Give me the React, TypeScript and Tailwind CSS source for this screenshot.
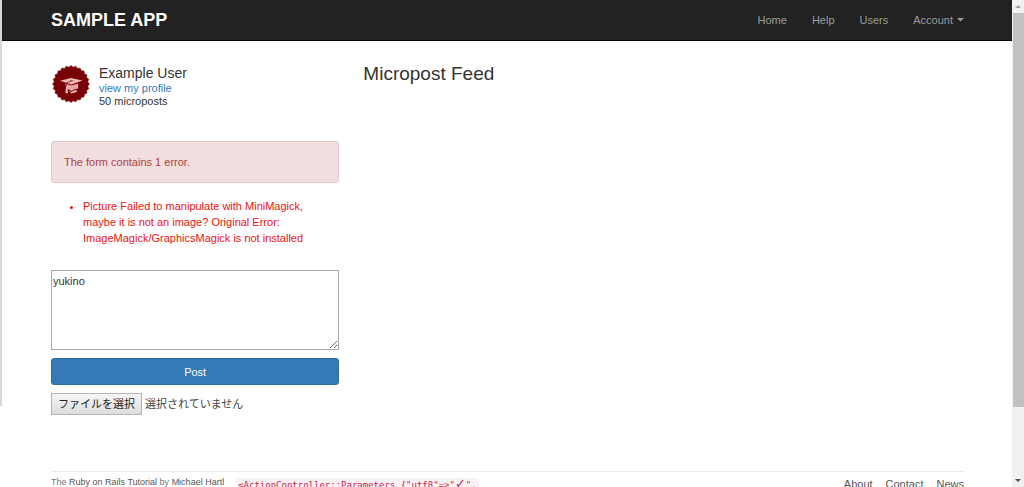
import React from "react";

const navLinks = ["Home", "Help", "Users"];
const footerLinks = ["About", "Contact", "News"];

function Badge() {
  const points = Array.from({ length: 48 }, (_, i) => {
    const r = i % 2 ? 16.8 : 18.4;
    const a = (i * Math.PI) / 24;
    return `${(20 + r * Math.cos(a)).toFixed(2)},${(20 + r * Math.sin(a)).toFixed(2)}`;
  }).join(" ");
  return (
    <svg viewBox="0 0 40 40" className="size-10 shrink-0" role="img" aria-label="Example User">
      <polygon points={points} fill="#780206" stroke="#780206" strokeWidth="0.6" strokeLinejoin="round" />
      <path d="M9 16.8 20 14 31.5 16.6 20.5 20.4Z" fill="#efb9b5" />
      <path d="M13.8 19.6 20.5 21.6 27.2 19.4 27.2 24.4 Q23 24.6 20.6 27 Q18.4 25.2 16.5 25.2Z" fill="#e9a5a1" />
      <path d="M20.5 16.8 15.3 19 15.3 24" fill="none" stroke="#780206" strokeWidth="0.7" />
      <path d="M15 22.5 16.2 22.5 17 29.2 14.4 29.2Z" fill="#efc0bd" />
      <path d="M17.8 26.4 20.4 29.4 25.8 28 25.8 26 Q22.6 26 20.6 28Z" fill="#efb9b5" />
      <ellipse cx="20.5" cy="16.6" rx="1.6" ry="0.7" fill="#9b3a3a" />
    </svg>
  );
}

function Header() {
  return (
    <header className="h-[41px] border-b border-[#080808] bg-[#222222] pr-12 pl-[49px]">
      <div className="flex h-10 items-center justify-between">
        <a href="#" className="text-[18px] leading-5 font-bold text-white">
          SAMPLE APP
        </a>
        <nav className="flex items-center gap-[25px] text-[11px] leading-4 text-[#9d9d9d]">
          {navLinks.map((label) => (
            <a key={label} href="#">
              {label}
            </a>
          ))}
          <button type="button" className="flex items-center gap-1">
            Account
            <svg viewBox="0 0 7 4" className="h-1 w-[7px]" aria-hidden="true">
              <path d="M0 0H7L3.5 3.6Z" fill="currentColor" />
            </svg>
          </button>
        </nav>
      </div>
    </header>
  );
}

function UserInfo() {
  return (
    <section className="flex gap-2">
      <Badge />
      <div className="text-[11px] leading-[13px]">
        <h1 className="text-[14px] leading-[18px]">Example User</h1>
        <a href="#" className="block text-[#337ab7]">
          view my profile
        </a>
        <span className="block">50 microposts</span>
      </div>
    </section>
  );
}

function MicropostForm() {
  return (
    <form className="mt-[33px] text-[11px] leading-4" onSubmit={(e) => e.preventDefault()}>
      <div role="alert" className="rounded-[3px] border border-[#e6c6cb] bg-[#f2dede] p-3 text-[#a94442]">
        The form contains 1 error.
      </div>
      <ul className="mt-[15px] list-disc pr-6 pl-8 text-[#ee1111]">
        <li>
          Picture Failed to manipulate with MiniMagick, maybe it is not an image? Original Error:
          ImageMagick/GraphicsMagick is not installed
        </li>
      </ul>
      <textarea
        aria-label="Compose new micropost"
        defaultValue="yukino"
        className="mt-6 block h-20 w-full resize-y border border-[#a9a9a9] bg-white px-px py-0.5"
      />
      <button
        type="submit"
        className="mt-2 block h-[27px] w-full rounded-[3px] border border-[#2e6da4] bg-[#337ab7] font-medium text-white"
      >
        Post
      </button>
      <label className="mt-2 flex items-center gap-[3px]">
        <input type="file" className="sr-only" />
        <span className="border border-[#b4b4b4] bg-linear-to-b from-[#f6f6f6] to-[#dddddd] px-1.5 py-0.5 text-[#222222]">
          ファイルを選択
        </span>
        <span className="text-[#444444]">選択されていません</span>
      </label>
    </form>
  );
}

function Footer() {
  return (
    <footer className="mt-14 flex items-start justify-between border-t border-[#eaeaea] pt-1 text-[#777777]">
      <div className="flex items-start gap-3">
        <small className="text-[9px] leading-3">
          The{" "}
          <a href="#" className="text-[#555555]">
            Ruby on Rails Tutorial
          </a>{" "}
          by{" "}
          <a href="#" className="text-[#555555]">
            Michael Hartl
          </a>
        </small>
        <code className="mt-0.5 rounded-[3px] bg-[#f9f2f4] px-0.5 font-['DejaVu_Sans_Mono',monospace] text-[9px] leading-3 text-[#c7254e]">
          {'<ActionController::Parameters {"utf8"=>"'}
          <span className="font-['DejaVu_Sans',sans-serif] text-[13px] leading-3">✓</span>
          {'",'}
        </code>
      </div>
      <nav className="flex gap-[13px] text-[11px] leading-4 text-[#555555]">
        {footerLinks.map((label) => (
          <a key={label} href="#">
            {label}
          </a>
        ))}
      </nav>
    </footer>
  );
}

function ScrollRail() {
  return (
    <div className="flex w-3 shrink-0 flex-col items-center bg-[#f1f1f1]" aria-hidden="true">
      <svg viewBox="0 0 12 13" className="h-[13px] w-3">
        <path d="M3 8H9L6 5Z" fill="#a3a3a3" />
      </svg>
      <div className="ml-px h-[81%] w-[11px] bg-[#c1c1c1]" />
      <svg viewBox="0 0 12 13" className="mt-auto h-[13px] w-3">
        <path d="M3 5H9L6 8Z" fill="#505050" />
      </svg>
    </div>
  );
}

export default function App() {
  return (
    <div className="flex h-screen overflow-hidden bg-white font-['Liberation_Sans','Noto_Sans_CJK_JP',sans-serif] text-[#333333]">
      <div className="h-5/6 w-0.5 shrink-0 bg-[#d8d8d8]" />
      <div className="min-w-0 flex-1">
        <Header />
        <main className="pr-12 pl-[49px]">
          <div className="grid grid-cols-3 gap-6 pt-[23px]">
            <aside>
              <UserInfo />
              <MicropostForm />
            </aside>
            <section className="col-span-2">
              <h3 className="text-[19px] leading-5">Micropost Feed</h3>
            </section>
          </div>
          <Footer />
        </main>
      </div>
      <ScrollRail />
    </div>
  );
}
